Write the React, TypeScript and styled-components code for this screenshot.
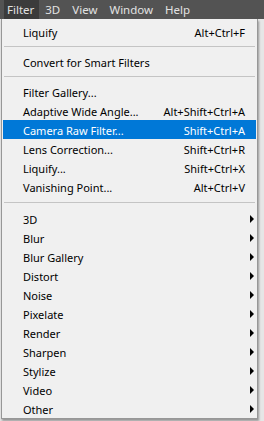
import styled, { createGlobalStyle } from 'styled-components'

const Global = createGlobalStyle`
  html, body {
    margin: 0;
    padding: 0;
    background: #3d3d3d;
    font-family: 'Noto Sans', 'Open Sans', sans-serif;
    font-size: 11px;
  }
`

const Styled = {
  Root: styled.div`
    width: 264px;
    height: 421px;
    display: flex;
    flex-direction: column;
    overflow: hidden;
    background: linear-gradient(90deg, #4a4a4a 0 40%, #6e2a1c 50%, #8a3a24 100%);
  `,
  MenuBar: styled.div`
    height: 19px;
    flex: none;
    display: flex;
    align-items: stretch;
    background: #535353;
    padding-left: 4px;
  `,
  BarItem: styled.div<{ $active?: boolean }>`
    display: flex;
    align-items: center;
    padding: 0 ${({ $active }) => ($active ? '5px' : '6px')} 0 ${({ $active }) => ($active ? '3px' : '6px')};
    color: #e2e2e2;
    background: ${({ $active }) => ($active ? '#3b3b3b' : 'transparent')};
    font-size: 11.5px;
  `,
  Body: styled.div`
    flex: 1;
    display: flex;
    align-items: flex-start;
    background: #e6e6e6;
  `,
  Menu: styled.div`
    width: 257px;
    margin-left: 1px;
    padding: 3px 0 0 1px;
    background: #f0f0f0;
    border: 1px solid #979797;
    border-top: none;
    box-shadow: 1px 2px 2px rgba(0, 0, 0, 0.35);
    box-sizing: border-box;
  `,
  Row: styled.div<{ $active?: boolean }>`
    height: 19px;
    display: flex;
    align-items: center;
    padding: 1px 11px 0 20px;
    box-sizing: border-box;
    margin-right: 1px;
    color: ${({ $active }) => ($active ? '#ffffff' : '#000000')};
    background: ${({ $active }) => ($active ? '#0078d7' : 'transparent')};
    white-space: nowrap;
  `,
  Label: styled.span`
    flex: 1;
  `,
  Shortcut: styled.span`
    text-align: right;
  `,
  Arrow: styled.span`
    width: 0;
    height: 0;
    margin-right: -9px;
    border-top: 4px solid transparent;
    border-bottom: 4px solid transparent;
    border-left: 4px solid #000;
  `,
  Separator: styled.div<{ $h?: number }>`
    height: ${({ $h }) => $h ?? 11}px;
    display: flex;
    align-items: center;
    padding: 0 2px 0 1px;
    &::after {
      content: '';
      flex: 1;
      height: 1px;
      background: #c4c4c4;
    }
  `,
}

const actions: [string, string, boolean?][] = [
  ['Filter Gallery...', ''],
  ['Adaptive Wide Angle...', 'Alt+Shift+Ctrl+A'],
  ['Camera Raw Filter...', 'Shift+Ctrl+A', true],
  ['Lens Correction...', 'Shift+Ctrl+R'],
  ['Liquify...', 'Shift+Ctrl+X'],
  ['Vanishing Point...', 'Alt+Ctrl+V'],
]

const submenus = [
  '3D',
  'Blur',
  'Blur Gallery',
  'Distort',
  'Noise',
  'Pixelate',
  'Render',
  'Sharpen',
  'Stylize',
  'Video',
  'Other',
]

const App = () => (
  <>
    <Global />
    <Styled.Root>
      <Styled.MenuBar>
        <Styled.BarItem $active>Filter</Styled.BarItem>
        <Styled.BarItem>3D</Styled.BarItem>
        <Styled.BarItem>View</Styled.BarItem>
        <Styled.BarItem>Window</Styled.BarItem>
        <Styled.BarItem>Help</Styled.BarItem>
      </Styled.MenuBar>
      <Styled.Body>
        <Styled.Menu>
          <Styled.Row>
            <Styled.Label>Liquify</Styled.Label>
            <Styled.Shortcut>Alt+Ctrl+F</Styled.Shortcut>
          </Styled.Row>
          <Styled.Separator />
          <Styled.Row>
            <Styled.Label>Convert for Smart Filters</Styled.Label>
          </Styled.Row>
          <Styled.Separator />
          {actions.map(([label, key, active]) => (
            <Styled.Row key={label} $active={active}>
              <Styled.Label>{label}</Styled.Label>
              <Styled.Shortcut>{key}</Styled.Shortcut>
            </Styled.Row>
          ))}
          <Styled.Separator $h={13} />
          {submenus.map((label) => (
            <Styled.Row key={label}>
              <Styled.Label>{label}</Styled.Label>
              <Styled.Arrow />
            </Styled.Row>
          ))}
        </Styled.Menu>
      </Styled.Body>
    </Styled.Root>
  </>
)

export default App
